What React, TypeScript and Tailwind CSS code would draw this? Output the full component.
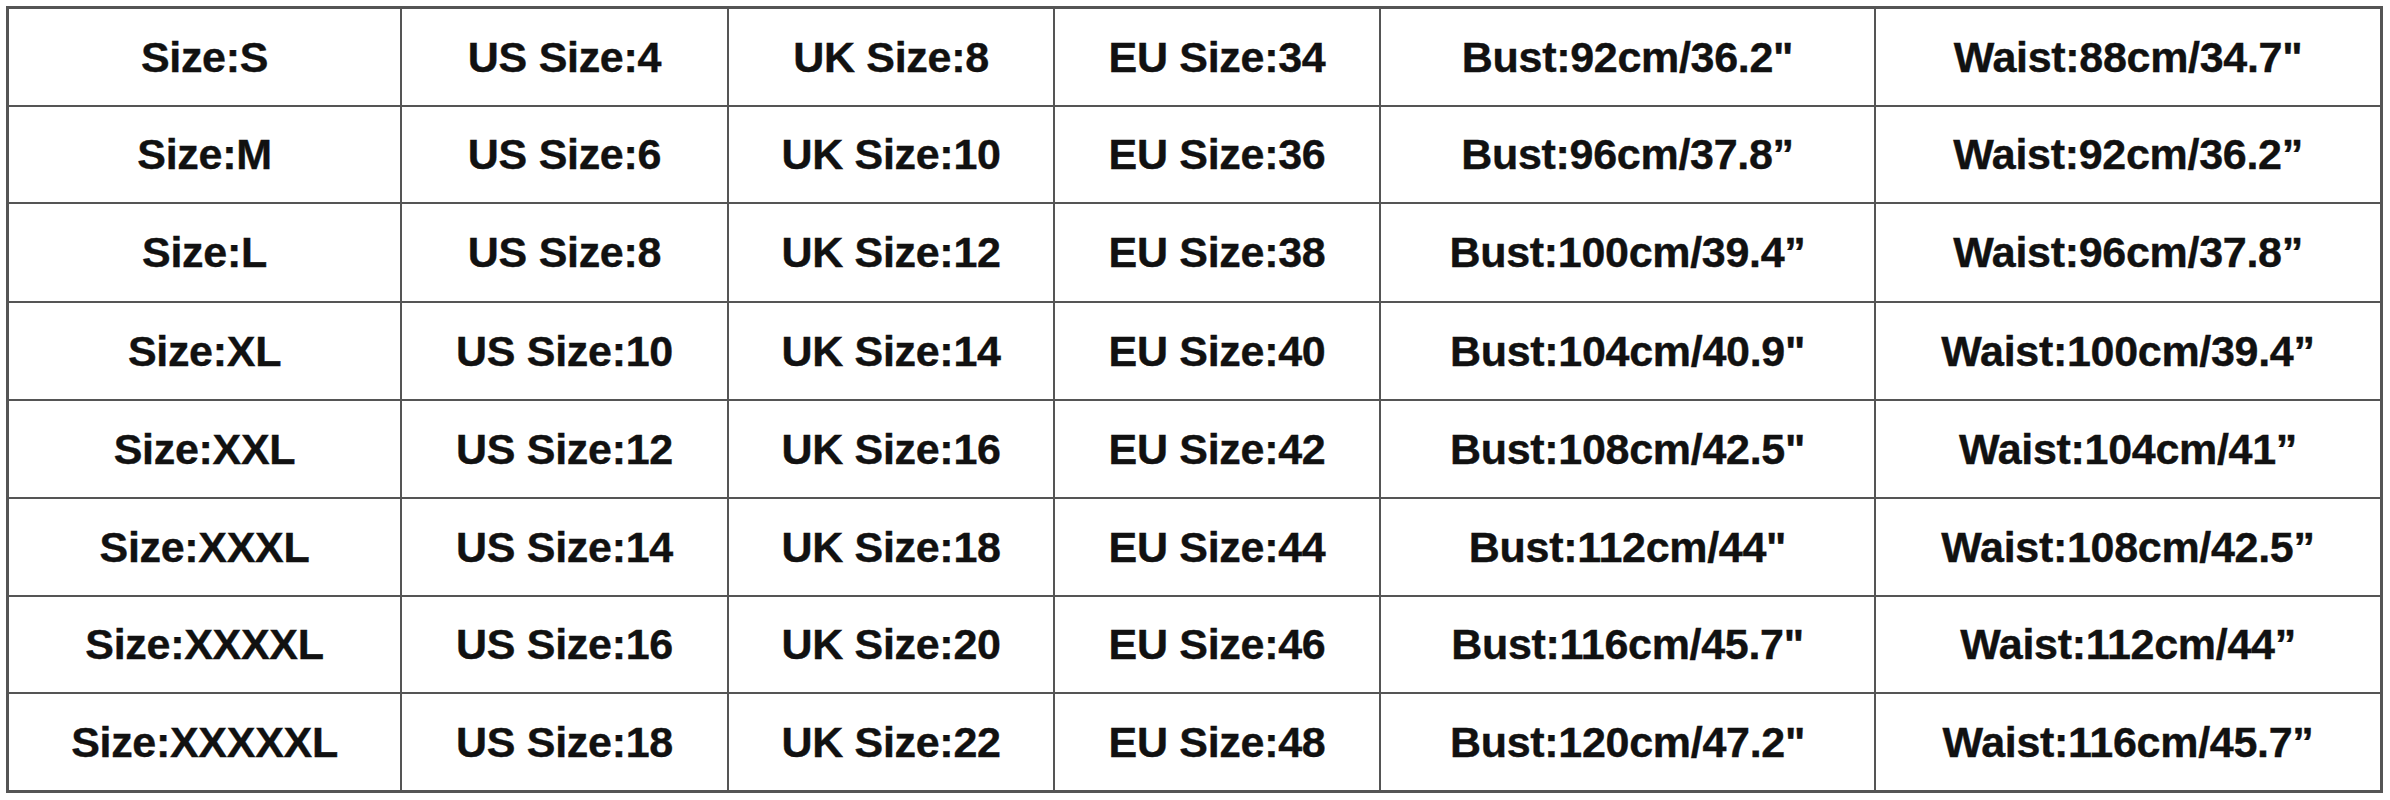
const rows: string[][] = [
  ["Size:S", "US Size:4", "UK Size:8", "EU Size:34", "Bust:92cm/36.2\"", "Waist:88cm/34.7\""],
  ["Size:M", "US Size:6", "UK Size:10", "EU Size:36", "Bust:96cm/37.8\u201d", "Waist:92cm/36.2\u201d"],
  ["Size:L", "US Size:8", "UK Size:12", "EU Size:38", "Bust:100cm/39.4\u201d", "Waist:96cm/37.8\u201d"],
  ["Size:XL", "US Size:10", "UK Size:14", "EU Size:40", "Bust:104cm/40.9\"", "Waist:100cm/39.4\u201d"],
  ["Size:XXL", "US Size:12", "UK Size:16", "EU Size:42", "Bust:108cm/42.5\"", "Waist:104cm/41\u201d"],
  ["Size:XXXL", "US Size:14", "UK Size:18", "EU Size:44", "Bust:112cm/44\"", "Waist:108cm/42.5\u201d"],
  ["Size:XXXXL", "US Size:16", "UK Size:20", "EU Size:46", "Bust:116cm/45.7\"", "Waist:112cm/44\u201d"],
  ["Size:XXXXXL", "US Size:18", "UK Size:22", "EU Size:48", "Bust:120cm/47.2\"", "Waist:116cm/45.7\u201d"],
];

export default function App() {
  return (
    <div className="h-[800px] w-[2390px] bg-white pl-[6px] pt-[6px]">
      <div className="grid w-[2377px] grid-cols-[391px_325px_324px_324px_493px_504px] grid-rows-[96px_95px_97px_96px_96px_96px_95px_96px] gap-[2px] bg-[#555555] p-[3px] font-['Liberation_Sans',Arial,sans-serif] text-[43px] font-bold text-[#111111]">
        {rows.map((row, r) =>
          row.map((cell, c) => (
            <div
              key={`${r}-${c}`}
              className="flex items-center justify-center whitespace-nowrap bg-white tracking-[-0.3px] [-webkit-text-stroke:0.4px_#111111]"
            >
              {cell}
            </div>
          ))
        )}
      </div>
    </div>
  );
}
